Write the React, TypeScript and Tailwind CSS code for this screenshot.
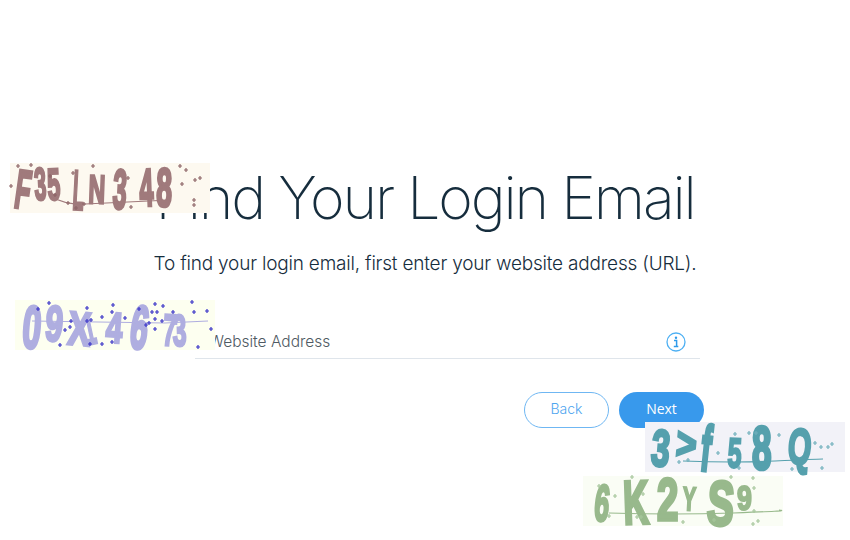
const captchas = [
  {
    className: 'left-[10px] top-[163px] bg-[#fdf9f0]',
    color: '#a07a7c',
    dotColor: '#8d6467',
    line: 'M40 33 Q55 42 75 41 T160 37',
    chars: [
      { c: 'F', x: 3, y: 44, r: 8, w: 15, h: 39 },
      { c: '3', x: 25, y: 37, r: -3, w: 13, h: 33 },
      { c: '5', x: 38, y: 37, r: -3, w: 14, h: 32 },
      { c: 'L', x: 62, y: 46, r: 3, w: 11, h: 40 },
      { c: 'N', x: 78, y: 40, r: 2, w: 14, h: 29 },
      { c: '3', x: 102, y: 45, r: 3, w: 15, h: 40 },
      { c: '4', x: 130, y: 43, r: -2, w: 15, h: 38 },
      { c: '8', x: 146, y: 43, r: 1, w: 17, h: 39 },
    ],
    dots: [[1, 23], [8, 3], [21, 2], [40, 13], [45, 32], [58, 40], [63, 10], [66, 45], [74, 41], [83, 3], [118, 15], [121, 44], [170, 3], [176, 7], [172, 21], [185, 17], [190, 15], [184, 37], [184, 42]],
  },
  {
    className: 'left-[15px] top-[300px] bg-[#fdfff0]',
    color: '#afaee0',
    dotColor: '#3a34c8',
    line: 'M17 21 L150 23 L193 21',
    chars: [
      { c: '0', x: 6, y: 47, r: 5, w: 20, h: 43 },
      { c: '9', x: 29, y: 40, r: 5, w: 19, h: 36 },
      { c: 'X', x: 52, y: 44, r: 5, w: 20, h: 34 },
      { c: '1', x: 72, y: 45, r: -12, w: 12, h: 31 },
      { c: '4', x: 90, y: 42, r: 4, w: 18, h: 31 },
      { c: '6', x: 113, y: 47, r: 8, w: 19, h: 44 },
      { c: '7', x: 147, y: 45, r: 4, w: 14, h: 32 },
      { c: '3', x: 158, y: 46, r: -2, w: 15, h: 32 },
    ],
    dots: [[23, 9], [34, 3], [45, 45], [50, 30], [55, 27], [56, 21], [72, 21], [72, 8], [75, 44], [76, 20], [87, 17], [87, 44], [97, 42], [98, 5], [97, 12], [110, 18], [124, 9], [131, 25], [134, 23], [137, 12], [140, 19], [140, 29], [140, 4], [142, 12], [147, 21], [148, 6], [158, 12], [177, 2], [179, 12], [192, 11], [196, 29], [183, 47]],
  },
  {
    className: 'left-[645px] top-[422px] bg-[#f2f2f8]',
    color: '#55a0ad',
    dotColor: '#70b0bc',
    line: 'M38 39 Q90 41 130 39 T178 37',
    chars: [
      { c: '3', x: 5, y: 43, r: 5, w: 20, h: 37 },
      { c: '>', x: 30, y: 36, r: 5, w: 21, h: 32 },
      { c: 'f', x: 54, y: 48, r: 6, w: 18, h: 46 },
      { c: '5', x: 82, y: 45, r: 3, w: 15, h: 30 },
      { c: '8', x: 107, y: 47, r: 0, w: 21, h: 44 },
      { c: 'Q', x: 142, y: 41, r: 4, w: 18, h: 36 },
    ],
    dots: [[34, 40], [43, 38], [73, 31], [90, 12], [104, 11], [111, 11], [134, 13], [94, 46], [147, 47], [170, 21], [176, 25], [183, 25], [187, 22], [177, 46]],
  },
  {
    className: 'left-[583px] top-[476px] bg-[#fafdf5]',
    color: '#98b98c',
    dotColor: '#a6c69c',
    line: 'M26 37 Q90 39 150 37 T196 34',
    chars: [
      { c: '6', x: 10, y: 44, r: 6, w: 16, h: 37 },
      { c: 'K', x: 41, y: 48, r: -2, w: 21, h: 44 },
      { c: '2', x: 74, y: 44, r: 0, w: 23, h: 42 },
      { c: 'Y', x: 99, y: 34, r: 3, w: 12, h: 24 },
      { c: 'S', x: 123, y: 48, r: 4, w: 24, h: 45 },
      { c: '9', x: 154, y: 34, r: 0, w: 16, h: 25 },
    ],
    dots: [[16, 10], [32, 20], [26, 40], [49, 1], [60, 18], [54, 41], [58, 41], [100, 46], [131, 44], [148, 1], [170, 2], [171, 12], [171, 35], [175, 45], [170, 48]],
  },
];

function Captcha({ captcha }: { captcha: (typeof captchas)[number] }) {
  return (
    <div className={`absolute h-[50px] w-[200px] ${captcha.className}`}>
      <svg width="200" height="50" viewBox="0 0 200 50" className="overflow-visible">
        <g className="blur-[0.5px]">
          {captcha.chars.map((ch, i) => (
            <text
              key={i}
              transform={`translate(${ch.x} ${ch.y}) rotate(${ch.r}) scale(${ch.w / 30} ${ch.h / 36})`}
              fontFamily="'Liberation Sans', sans-serif"
              fontWeight="700"
              fontSize="50"
              fill={captcha.color}
              stroke={captcha.color}
              strokeWidth="3"
            >
              {ch.c}
            </text>
          ))}
          <path d={captcha.line} fill="none" stroke={captcha.color} strokeWidth="1.2" />
        </g>
        {captcha.dots.map(([x, y], i) => (
          <path key={i} d={`M${x - 2} ${y}H${x + 2}M${x} ${y - 2}V${y + 2}`} stroke={captcha.dotColor} strokeWidth="1.2" />
        ))}
      </svg>
    </div>
  );
}

export default function App() {
  return (
    <div className="relative h-[540px] w-[850px] overflow-hidden bg-white font-['Inter',sans-serif]">
      <div className="flex flex-col items-center pt-[160px]">
        <h1 className="text-[59px] leading-[76px] font-extralight tracking-[-2.2px] whitespace-nowrap text-[#162d3d]">
          Find Your Login Email
        </h1>
        <p className="mt-[15px] text-[19px] leading-[26px] font-light tracking-[-0.2px] whitespace-nowrap text-[#162d3d]">
          To find your login email, first enter your website address (URL).
        </p>
        <div className="mt-[46px] ml-[45px] w-[505px]">
          <div className="flex h-[36px] items-center justify-between border-b border-[#dfe5eb] pt-[2px] pr-[14px] pl-[14px]">
            <span className="text-[15.5px] font-light text-[#4f5a63]">Website Address</span>
            <svg width="20" height="20" viewBox="0 0 20 20" fill="none">
              <circle cx="10" cy="10" r="9" stroke="#4eb0f3" strokeWidth="1.3" />
              <circle cx="10" cy="5.8" r="1.2" fill="#2f9bea" />
              <path d="M8 8.6H10.6V14M7.8 14.4H12.3" stroke="#2f9bea" strokeWidth="1.5" />
            </svg>
          </div>
          <div className="mt-[33px] -mr-[4px] flex justify-end gap-[10px]">
            <button className="h-[36px] w-[85px] rounded-full border border-[#6fb7f3] bg-white pb-[3px] text-[14px] font-light text-[#4ea5ef]">
              Back
            </button>
            <button className="h-[36px] w-[85px] rounded-full bg-[#3899ec] pb-[3px] font-['Open_Sans',sans-serif] text-[14px] text-white">
              Next
            </button>
          </div>
        </div>
      </div>
      {captchas.map((captcha, i) => (
        <Captcha key={i} captcha={captcha} />
      ))}
    </div>
  );
}
